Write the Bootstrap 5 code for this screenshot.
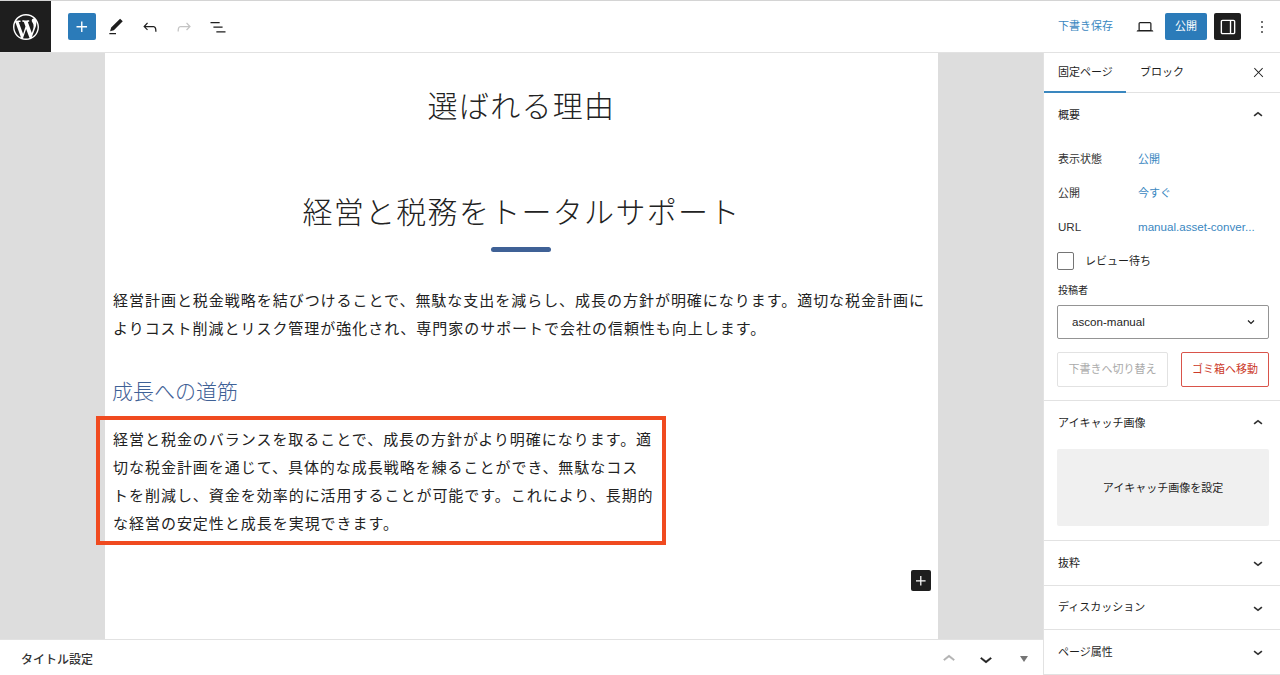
<!DOCTYPE html>
<html lang="ja">
<head>
  <meta charset="UTF-8" />
  <title>選ばれる理由</title>
  <link href="https://cdn.jsdelivr.net/npm/bootstrap@5.3.3/dist/css/bootstrap.min.css" rel="stylesheet" />
  <style>
    html, body { height: 675px; overflow: hidden; }
    body { font-family: "Liberation Sans", "Noto Sans CJK JP", sans-serif; font-size: 11px; color: #1e1e1e; background: #fff; }
    svg { fill: currentColor; display: block; flex: none; }
    .chev { stroke: currentColor; stroke-width: .5; }

    .top-bar { height: 53px; flex: none; border-top: 1px solid #d4d4d4; border-bottom: 1px solid #e2e2e2; }
    .wp-logo { width: 51px; background: #1e1e1e; color: #fff; }
    .tool-btn { width: 28px; height: 27px; border-radius: 2px; color: #1e1e1e; }
    .tool-blue { background: #2b7bb9; color: #fff; }
    .tool-dark { width: 27px; background: #1e1e1e; color: #fff; }
    .tool-off { color: #c4c4c4; }
    .left-tools { padding-left: 17px; gap: 6px; }
    .draft-link { color: #3a87bf; margin-right: 18px; }
    .publish-btn { width: 42px; height: 27px; background: #2b7bb9; color: #fff; border-radius: 2px; margin: 0 7px 0 6px; }
    .more-btn { margin: 0 4px 0 7px; }

    .work-area { min-height: 0; }
    .canvas-side { width: 1043px; flex: none; min-height: 0; }
    .canvas-wrap { background: #ddd; padding: 0 105px; min-height: 0; }
    .paper { background: #fff; height: 100%; position: relative; padding: 31px 13px 0 8px; font-family: "Noto Sans CJK JP", sans-serif; }
    .doc-title { font-size: 30px; line-height: 40px; letter-spacing: 1.3px; font-weight: 300; text-align: center; margin: 0 -13px 0 -8px; color: #222; }
    .doc-sub { margin-top: 66px; }
    .doc-rule { width: 60px; height: 5px; background: #3f6196; border-radius: 3px; margin: 17px auto 0; position: relative; left: 2px; }
    .doc-text { font-size: 15px; line-height: 28px; letter-spacing: .97px; margin: 0; color: #222; }
    .doc-lead { margin-top: 34px; }
    .doc-heading { font-size: 21px; line-height: 30px; font-weight: 300; color: #3f6196; margin: 33px 0 11px -1px; }
    .mark-box { width: 570px; margin-left: -17px; border: 4px solid #f04a1f; padding: 5px 0 4px 13px; }
    .add-block { position: absolute; left: 806px; top: 517px; width: 20px; height: 21px; background: #1e1e1e; color: #fff; border-radius: 2px; }

    .meta-bar { height: 36px; flex: none; border-top: 1px solid #e2e2e2; padding: 2px 9px 0 21px; }
    .meta-title { font-size: 12px; font-weight: 500; color: #333; font-family: "Noto Sans CJK JP", sans-serif; }
    .meta-tools { gap: 13px; }
    .meta-grey { color: #b0b0b0; }
    .meta-caret { width: 0; height: 0; border-left: 4px solid transparent; border-right: 4px solid transparent; border-top: 6px solid #757575; margin: 0 6px 0 9px; }

    .side-panel { width: 237px; flex: none; border-left: 1px solid #e2e2e2; }
    .side-tabs { height: 40px; border-bottom: 1px solid #e2e2e2; }
    .side-tab { height: 40px; padding: 0 14px; display: flex; align-items: center; white-space: nowrap; }
    .side-tab-on { width: 82px; padding-right: 0; box-shadow: inset 0 -2px 0 #3a87bf; }
    .side-close { margin-left: auto; margin-right: 14px; }
    .side-head { padding: 0 13px 0 14px; height: 44px; }
    .side-block { border-bottom: 1px solid #e2e2e2; }
    .side-block-open { height: 308px; }
    .side-rows { padding-top: 5px; }
    .side-row { padding-left: 14px; height: 34px; }
    .side-label { width: 80px; flex: none; color: #333; }
    .side-val { color: #3a87bf; }
    .url-text { font-size: 11.6px; }
    .review-row { padding-left: 13px; }
    .review-box[type=checkbox] { flex: none; margin: 0 11px 0 0; width: 17px; height: 18px; border: 1px solid #757575; border-radius: 2px; }
    .author-label { font-size: 10px; padding-left: 14px; margin-top: 5px; line-height: 15px; }
    .author-select { width: 212px; height: 34px; margin: 7px 0 0 13px; font-size: 11.6px; padding: 0 14px; border: 1px solid #949494; border-radius: 2px; color: #1e1e1e; background-image: url("data:image/svg+xml,%3csvg xmlns='http://www.w3.org/2000/svg' viewBox='0 0 16 16'%3e%3cpath fill='none' stroke='%231e1e1e' stroke-width='2.4' d='M2 5l6 6 6-6'/%3e%3c/svg%3e"); background-position: right 13px center; background-size: 8px 8px; font-family: inherit; }
    .action-row { padding: 13px 11px 0 13px; }
    .act-btn { height: 35px; font-size: 11px; border-radius: 2px; display: flex; align-items: center; justify-content: center; }
    .act-draft { width: 111px; border: 1px solid #e2e2e2; color: #aaa; }
    .act-trash { width: 88px; border: 1px solid #d9534a; color: #cc3a2a; }
    .thumb-block { height: 140px; }
    .thumb-area { width: 212px; height: 77px; margin: 4px 0 0 13px; padding-top: 1px; background: #f0f0f0; border-radius: 2px; }
    .fold-a { height: 45px; }
    .fold-b { height: 44px; }
  </style>
</head>
<body class="d-flex flex-column">

  <header class="top-bar d-flex align-items-stretch">
    <div class="wp-logo d-flex align-items-center justify-content-center">
      <svg width="26" height="26" viewBox="0 0 20 20"><path d="M20 10c0-5.51-4.49-10-10-10C4.48 0 0 4.49 0 10c0 5.52 4.48 10 10 10 5.51 0 10-4.48 10-10zM7.78 15.37L4.37 6.22c.55-.02 1.17-.08 1.17-.08.5-.06.44-1.13-.06-1.11 0 0-1.45.11-2.37.11-.18 0-.37 0-.58-.01C4.12 2.69 6.87 1.11 10 1.11c2.33 0 4.45.87 6.05 2.34-.68-.11-1.65.39-1.65 1.58 0 .74.45 1.36.9 2.1.35.61.55 1.36.55 2.46 0 1.49-1.4 5-1.4 5l-3.03-8.37c.54-.02.82-.17.82-.17.5-.05.44-1.25-.06-1.22 0 0-1.44.12-2.38.12-.87 0-2.33-.12-2.33-.12-.5-.03-.56 1.2-.06 1.22l.92.08 1.26 3.41zM17.41 10c.24-.64.74-1.87.43-4.25.7 1.29 1.05 2.71 1.05 4.25 0 3.29-1.73 6.24-4.4 7.78.97-2.59 1.94-5.2 2.92-7.78zM6.1 18.09C3.12 16.65 1.11 13.53 1.11 10c0-1.3.23-2.48.72-3.59C3.25 10.3 4.67 14.2 6.1 18.09zm4.03-6.63l2.58 6.98c-.86.29-1.76.45-2.71.45-.79 0-1.57-.11-2.29-.33.81-2.38 1.62-4.74 2.42-7.1z"/></svg>
    </div>
    <div class="left-tools d-flex align-items-center">
      <div class="tool-btn tool-blue d-flex align-items-center justify-content-center"><svg width="22" height="22" viewBox="0 0 24 24"><path d="M11 12.5V17.5H12.5V12.5H17.5V11H12.5V6H11V11H6V12.5H11Z"/></svg></div>
      <div class="tool-btn d-flex align-items-center justify-content-center"><svg width="20" height="20" viewBox="0 0 24 24"><path d="M20.1 5.1L16.9 2 6.2 12.7l-1.3 4.4 4.5-1.3L20.1 5.1zM4 20.8h8v-1.5H4v1.5z"/></svg></div>
      <div class="tool-btn d-flex align-items-center justify-content-center"><svg width="20" height="20" viewBox="0 0 24 24"><path d="M18.3 11.7c-.6-.6-1.4-.9-2.3-.9H6.7l2.9-3.3-1.1-1-4.5 5L8.5 16l1-1-2.7-2.7H16c.5 0 .9.2 1.3.5 1 1 1 3.4 1 4.5v.3h1.5v-.2c0-1.5 0-4.3-1.5-5.7z"/></svg></div>
      <div class="tool-btn tool-off d-flex align-items-center justify-content-center"><svg width="20" height="20" viewBox="0 0 24 24"><path d="M15.6 6.5l-1.1 1 2.9 3.3H8c-.9 0-1.7.3-2.3.9-1.4 1.5-1.4 4.2-1.4 5.6v.2h1.5v-.3c0-1.1 0-3.5 1-4.5.3-.3.7-.5 1.3-.5h9.2L14.5 15l1.1 1.1 4.6-4.6-4.6-5z"/></svg></div>
      <div class="tool-btn d-flex align-items-center justify-content-center"><svg width="20" height="20" viewBox="0 0 24 24"><path d="M3 6h11v1.5H3V6zm3.5 5.5h11V13h-11v-1.5zM21 17H10v1.5h11V17z"/></svg></div>
    </div>
    <div class="ms-auto d-flex align-items-center">
      <span class="draft-link">下書き保存</span>
      <div class="tool-btn d-flex align-items-center justify-content-center"><svg width="20" height="20" viewBox="0 0 24 24"><path d="M20.5 16h-.7V8c0-1.1-.9-2-2-2H6.2c-1.1 0-2 .9-2 2v8h-.7c-.8 0-1.5.7-1.5 1.5h20c0-.8-.7-1.5-1.5-1.5zM5.7 8c0-.3.2-.5.5-.5h11.6c.3 0 .5.2.5.5v7.6H5.7V8z"/></svg></div>
      <div class="publish-btn d-flex align-items-center justify-content-center">公開</div>
      <div class="tool-btn tool-dark d-flex align-items-center justify-content-center"><svg width="22" height="22" viewBox="0 0 24 24"><path d="M18 4H6c-1.1 0-2 .9-2 2v12c0 1.1.9 2 2 2h12c1.1 0 2-.9 2-2V6c0-1.1-.9-2-2-2zm-4 14.5H6c-.3 0-.5-.2-.5-.5V6c0-.3.2-.5.5-.5h8v13zm4.5-.5c0 .3-.2.5-.5.5h-2.5v-13H18c.3 0 .5.2.5.5v12z"/></svg></div>
      <div class="tool-btn more-btn d-flex align-items-center justify-content-center"><svg width="20" height="20" viewBox="0 0 24 24"><path d="M13 19h-2v-2h2v2zm0-6h-2v-2h2v2zm0-6h-2V5h2v2z"/></svg></div>
    </div>
  </header>

  <div class="work-area d-flex flex-grow-1">
    <main class="canvas-side d-flex flex-column">
      <div class="canvas-wrap flex-grow-1">
        <div class="paper">
          <h1 class="doc-title">選ばれる理由</h1>
          <h2 class="doc-title doc-sub">経営と税務をトータルサポート</h2>
          <div class="doc-rule"></div>
          <p class="doc-text doc-lead">経営計画と税金戦略を結びつけることで、無駄な支出を減らし、成長の方針が明確になります。適切な税金計画によりコスト削減とリスク管理が強化され、専門家のサポートで会社の信頼性も向上します。</p>
          <h3 class="doc-heading">成長への道筋</h3>
          <div class="mark-box">
            <p class="doc-text">経営と税金のバランスを取ることで、成長の方針がより明確になります。適<br>切な税金計画を通じて、具体的な成長戦略を練ることができ、無駄なコス<br>トを削減し、資金を効率的に活用することが可能です。これにより、長期的<br>な経営の安定性と成長を実現できます。</p>
          </div>
          <div class="add-block d-flex align-items-center justify-content-center"><svg width="20" height="20" viewBox="0 0 24 24"><path d="M11 12.5V17.5H12.5V12.5H17.5V11H12.5V6H11V11H6V12.5H11Z"/></svg></div>
        </div>
      </div>
      <div class="meta-bar d-flex align-items-center justify-content-between">
        <span class="meta-title">タイトル設定</span>
        <div class="meta-tools d-flex align-items-center">
          <svg class="meta-grey chev" width="24" height="24" viewBox="0 0 24 24"><path d="M6.5 12.4L12 8l5.5 4.4-.9 1.2L12 10l-4.5 3.6-1-1.2z"/></svg>
          <svg class="chev" width="24" height="24" viewBox="0 0 24 24"><path d="M17.5 11.6L12 16l-5.5-4.4.9-1.2L12 14l4.5-3.6 1 1.2z"/></svg>
          <div class="meta-caret"></div>
        </div>
      </div>
    </main>

    <aside class="side-panel">
      <div class="side-tabs d-flex align-items-center">
        <div class="side-tab side-tab-on">固定ページ</div>
        <div class="side-tab">ブロック</div>
        <svg class="side-close" width="15" height="15" viewBox="0 0 24 24"><path d="M13 11.8l6.1-6.3-1-1-6.1 6.2-6.1-6.2-1 1 6.1 6.3-6.5 6.7 1 1 6.5-6.6 6.5 6.6 1-1z"/></svg>
      </div>

      <section class="side-block side-block-open">
        <div class="side-head d-flex align-items-center justify-content-between">
          <span>概要</span>
          <svg class="chev" width="18" height="18" viewBox="0 0 24 24"><path d="M6.5 12.4L12 8l5.5 4.4-.9 1.2L12 10l-4.5 3.6-1-1.2z"/></svg>
        </div>
        <div class="side-rows">
          <div class="side-row d-flex align-items-center"><span class="side-label">表示状態</span><span class="side-val">公開</span></div>
          <div class="side-row d-flex align-items-center"><span class="side-label">公開</span><span class="side-val">今すぐ</span></div>
          <div class="side-row d-flex align-items-center"><span class="side-label url-text">URL</span><span class="side-val url-text">manual.asset-conver...</span></div>
          <div class="side-row review-row d-flex align-items-center">
            <input class="form-check-input review-box" type="checkbox" aria-label="レビュー待ち" />
            <span>レビュー待ち</span>
          </div>
        </div>
        <div class="author-label">投稿者</div>
        <select class="form-select author-select" aria-label="投稿者"><option>ascon-manual</option></select>
        <div class="action-row d-flex justify-content-between">
          <div class="act-btn act-draft">下書きへ切り替え</div>
          <div class="act-btn act-trash">ゴミ箱へ移動</div>
        </div>
      </section>

      <section class="side-block thumb-block">
        <div class="side-head d-flex align-items-center justify-content-between">
          <span>アイキャッチ画像</span>
          <svg class="chev" width="18" height="18" viewBox="0 0 24 24"><path d="M6.5 12.4L12 8l5.5 4.4-.9 1.2L12 10l-4.5 3.6-1-1.2z"/></svg>
        </div>
        <div class="thumb-area d-flex align-items-center justify-content-center">アイキャッチ画像を設定</div>
      </section>

      <section class="side-block fold-a side-head d-flex align-items-center justify-content-between">
        <span>抜粋</span>
        <svg class="chev" width="18" height="18" viewBox="0 0 24 24"><path d="M17.5 11.6L12 16l-5.5-4.4.9-1.2L12 14l4.5-3.6 1 1.2z"/></svg>
      </section>
      <section class="side-block fold-b side-head d-flex align-items-center justify-content-between">
        <span>ディスカッション</span>
        <svg class="chev" width="18" height="18" viewBox="0 0 24 24"><path d="M17.5 11.6L12 16l-5.5-4.4.9-1.2L12 14l4.5-3.6 1 1.2z"/></svg>
      </section>
      <section class="side-block fold-a side-head d-flex align-items-center justify-content-between">
        <span>ページ属性</span>
        <svg class="chev" width="18" height="18" viewBox="0 0 24 24"><path d="M17.5 11.6L12 16l-5.5-4.4.9-1.2L12 14l4.5-3.6 1 1.2z"/></svg>
      </section>
    </aside>
  </div>

  <script src="https://cdn.jsdelivr.net/npm/bootstrap@5.3.3/dist/js/bootstrap.bundle.min.js"></script>
</body>
</html>
